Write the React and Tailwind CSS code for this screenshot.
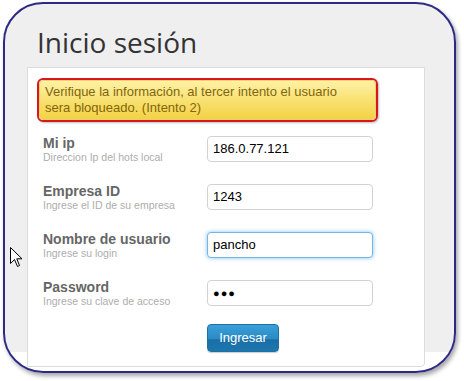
import React from "react";

function Row({ label, sub, value, focused, password }) {
  return (
    <div className="flex items-start h-[25px]">
      <div className="w-[164px] shrink-0">
        <div className="text-[14px] leading-[14px] font-bold text-[#666]">{label}</div>
        <div className="text-[10.5px] leading-[10px] text-[#adadad] mt-[2px]">{sub}</div>
      </div>
      <div
        className={
          "w-[166px] h-[26px] rounded-[4px] bg-white flex items-center pl-[5px] text-[13px] text-black " +
          (focused
            ? "border border-[#74b6e6] shadow-[0_0_4px_rgba(82,168,236,0.7)]"
            : "border border-[#d2d2d2]")
        }
      >
        {password ? <span className="text-[11px] tracking-[1px] font-bold">●●●</span> : value}
      </div>
    </div>
  );
}

export default function App() {
  return (
    <div className="relative w-[464px] h-[381px] bg-white overflow-hidden font-['Liberation_Sans',Arial,sans-serif]">
      <div className="ml-[3px] mt-[2px] w-[453px] h-[371px] rounded-[40px] border-2 border-[#2d2a85] overflow-hidden shadow-[2px_3px_4px_rgba(0,0,0,0.35)] bg-[linear-gradient(#efefef_0,#efefef_348px,#ffffff_348px)]">
        <div className="h-[63px] pl-[32px] pt-[24px]">
          <div className="font-['Open_Sans',sans-serif] text-[28px] leading-none text-[#333]">Inicio sesión</div>
        </div>
        <div className="ml-[22px] w-[398px] h-[300px] bg-white border border-[#dcdcdc] rounded-br-[4px] pt-[10px] pl-[9px]">
          <div className="w-[341px] h-[44px] rounded-[6px] border-2 border-[#d8161d] shadow-[1px_1px_2px_rgba(0,0,0,0.25)]">
            <div className="h-full rounded-[4px] border border-[#f0d26a] bg-[linear-gradient(#fdf1a6,#f8e06e_55%,#f3d245)] pl-[5px] pr-[8px] pt-[3px] text-[13px] leading-[16px] text-[#82650c]">
              Verifique la información, al tercer intento el usuario <br />sera bloqueado. (Intento 2)
            </div>
          </div>
          <div className="pl-[6px] mt-[14px] flex flex-col gap-[23px]">
            <Row label="Mi ip" sub="Direccion Ip del hots local" value="186.0.77.121" />
            <Row label="Empresa ID" sub="Ingrese el ID de su empresa" value="1243" />
            <Row label="Nombre de usuario" sub="Ingrese su login" value="pancho" focused />
            <Row label="Password" sub="Ingrese su clave de acceso" password />
          </div>
          <div className="pl-[170px] mt-[19px]">
            <div className="w-[72px] h-[28px] rounded-[4px] border border-[#1f6fa3] bg-[linear-gradient(#3a9fd8,#2a8ac4_55%,#1b6ea6_56%,#1d76ae)] flex items-center justify-center text-white text-[13px] shadow-[0_1px_1px_rgba(0,0,0,0.2)]">
              Ingresar
            </div>
          </div>
        </div>
      </div>
      <svg className="absolute left-[10px] top-[247px]" width="13" height="20" viewBox="0 0 13 20">
        <path d="M0.5 0.5 L0.5 16.5 L4.5 12.5 L7.5 19.5 L9.5 18.5 L6.8 11.8 L12 11.8 Z" fill="white" stroke="black" strokeWidth="1" />
      </svg>
    </div>
  );
}
